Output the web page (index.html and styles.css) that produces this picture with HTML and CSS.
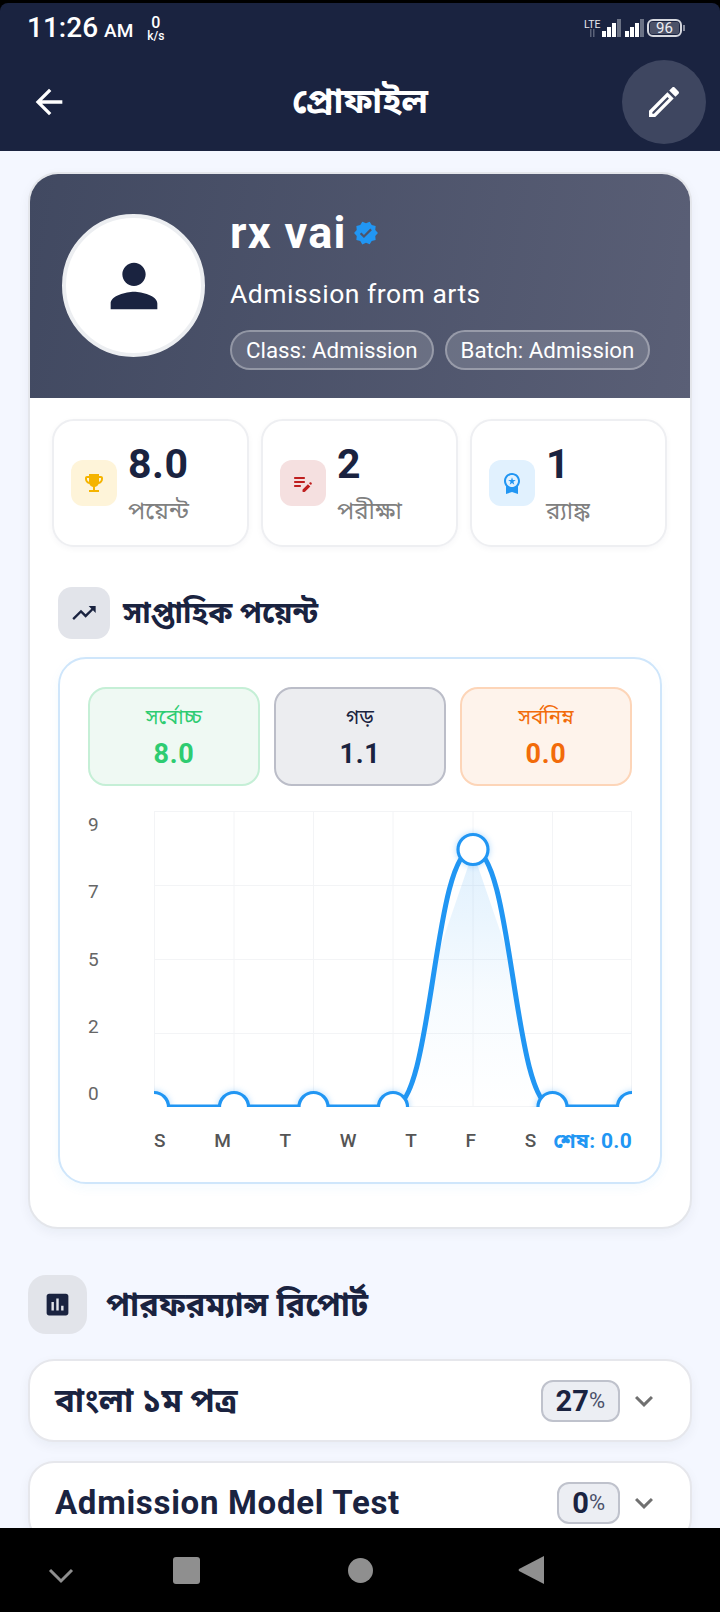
FILE: index.html
```html
<!DOCTYPE html>
<html lang="bn">
<head>
<meta charset="utf-8">
<title>প্রোফাইল</title>
<link rel="stylesheet" href="styles.css">
</head>
<body>
<div class="screen">
  <header class="topbar">
    <div class="status">
      <div class="status-left">
        <span class="clock">11:26</span><span class="ampm">AM</span>
        <span class="speed"><b class="speed-num">0</b><b class="speed-unit">k/s</b></span>
      </div>
      <div class="status-right">
        <svg class="sig" viewBox="0 0 61 18" width="61" height="18">
          <text x="0" y="9" class="lte">LTE</text>
          <rect x="6" y="10" width="1.5" height="8" fill="#5b6278"/><rect x="9" y="10" width="1.5" height="8" fill="#5b6278"/>
          <rect x="18" y="12" width="4" height="6" fill="#fff"/><rect x="23" y="8" width="4" height="10" fill="#fff"/><rect x="28" y="4" width="4" height="14" fill="#fff"/><rect x="33" y="0" width="4" height="18" fill="#6b7285"/>
          <rect x="41" y="12" width="4" height="6" fill="#fff"/><rect x="46" y="8" width="4" height="10" fill="#fff"/><rect x="51" y="4" width="4" height="14" fill="#fff"/><rect x="56" y="0" width="4" height="18" fill="#6b7285"/>
        </svg>
        <div class="battery"><span class="battery-fill">96</span></div>
      </div>
    </div>
    <div class="appbar">
      <svg class="back" viewBox="0 0 24 24"><path d="M20 11H7.83l5.59-5.59L12 4l-8 8 8 8 1.41-1.41L7.83 13H20v-2z"/></svg>
      <h1 class="appbar-title">প্রোফাইল</h1>
      <div class="edit-btn"><svg viewBox="0 0 24 24"><path d="M14.06 9.02l.92.92L5.92 19H5v-.92l9.06-9.06M17.66 3c-.25 0-.51.1-.7.29l-1.83 1.83 3.75 3.75 1.83-1.83c.39-.39.39-1.02 0-1.41l-2.34-2.34c-.2-.2-.45-.29-.71-.29zm-3.6 3.19L3 17.25V21h3.75L17.81 9.94l-3.75-3.75z"/></svg></div>
    </div>
  </header>

  <main class="content">
    <section class="profile-card">
      <div class="hero">
        <div class="avatar"><svg viewBox="0 0 24 24"><path d="M12 12c2.21 0 4-1.79 4-4s-1.79-4-4-4-4 1.79-4 4 1.79 4 4 4zm0 2c-2.67 0-8 1.34-8 4v2h16v-2c0-2.66-5.33-4-8-4z"/></svg></div>
        <div class="hero-info">
          <div class="name-row"><span class="name">rx vai</span><svg class="verified" viewBox="0 0 24 24"><path d="M23 12l-2.44-2.79.34-3.69-3.61-.82-1.89-3.2L12 2.96 8.6 1.5 6.71 4.69 3.1 5.5l.34 3.7L1 12l2.44 2.79-.34 3.7 3.61.82L8.6 22.5l3.4-1.47 3.4 1.46 1.89-3.19 3.61-.82-.34-3.69L23 12zm-12.91 4.72l-3.8-3.81 1.48-1.48 2.32 2.33 5.85-5.87 1.48 1.48-7.33 7.35z"/></svg></div>
          <div class="bio">Admission from arts</div>
          <div class="chips"><span class="chip">Class: Admission</span><span class="chip">Batch: Admission</span></div>
        </div>
      </div>

      <div class="stats">
        <div class="stat">
          <div class="stat-icon yellow"><svg viewBox="0 0 24 24"><path d="M19 5h-2V3H7v2H5c-1.1 0-2 .9-2 2v1c0 2.55 1.92 4.63 4.39 4.94.63 1.5 1.98 2.63 3.61 2.96V19H7v2h10v-2h-4v-3.1c1.63-.33 2.98-1.46 3.61-2.96C19.08 12.63 21 10.55 21 8V7c0-1.1-.9-2-2-2zM5 8V7h2v3.82C5.84 10.4 5 9.3 5 8zm14 0c0 1.3-.84 2.4-2 2.82V7h2v1z"/></svg></div>
          <div class="stat-text"><div class="stat-value">8.0</div><div class="stat-label">পয়েন্ট</div></div>
        </div>
        <div class="stat">
          <div class="stat-icon red"><svg viewBox="0 0 24 24"><path d="M14 11c0 .55-.45 1-1 1H4c-.55 0-1-.45-1-1s.45-1 1-1h9c.55 0 1 .45 1 1zM3 7c0 .55.45 1 1 1h9c.55 0 1-.45 1-1s-.45-1-1-1H4c-.55 0-1 .45-1 1zm7 8c0-.55-.45-1-1-1H4c-.55 0-1 .45-1 1s.45 1 1 1h5c.55 0 1-.45 1-1zm8.01-2.87l.71-.71c.39-.39 1.02-.39 1.41 0l.45.45c.39.39.39 1.02 0 1.41l-.71.71-1.86-1.86zm-1.06 1.06l-5.3 5.3c-.09.09-.15.22-.15.35V20.5c0 .28.22.5.5.5h1.65c.13 0 .26-.05.35-.15l5.3-5.3-2.35-2.36z"/></svg></div>
          <div class="stat-text"><div class="stat-value">2</div><div class="stat-label">পরীক্ষা</div></div>
        </div>
        <div class="stat">
          <div class="stat-icon blue"><svg viewBox="0 0 24 24"><path d="M9.68 13.69L12 11.93l2.31 1.76-.88-2.85L15.75 9h-2.84L12 6.19 11.09 9H8.25l2.31 1.84-.88 2.85zM20 10c0-4.42-3.58-8-8-8s-8 3.58-8 8c0 2.03.76 3.87 2 5.28V23l6-2 6 2v-7.72c1.24-1.41 2-3.25 2-5.28zm-8-6c3.31 0 6 2.69 6 6s-2.69 6-6 6-6-2.69-6-6 2.69-6 6-6z"/></svg></div>
          <div class="stat-text"><div class="stat-value">1</div><div class="stat-label">র‍্যাঙ্ক</div></div>
        </div>
      </div>

      <div class="weekly">
        <div class="section-head small">
          <div class="head-icon"><svg viewBox="0 0 24 24"><path d="M16 6l2.29 2.29-4.88 4.88-4-4L2 16.59 3.41 18l6-6 4 4 6.3-6.29L22 12V6z"/></svg></div>
          <h2 class="head-title">সাপ্তাহিক পয়েন্ট</h2>
        </div>
        <div class="chart-card">
          <div class="summary">
            <div class="sum green"><span class="sum-label">সর্বোচ্চ</span><span class="sum-value">8.0</span></div>
            <div class="sum gray"><span class="sum-label">গড়</span><span class="sum-value">1.1</span></div>
            <div class="sum orange"><span class="sum-label">সর্বনিম্ন</span><span class="sum-value">0.0</span></div>
          </div>
          <div class="chart">
            <div class="y-axis"><span>9</span><span>7</span><span>5</span><span>2</span><span>0</span></div>
            <div class="plot-col">
              <svg class="plot" viewBox="154 811 478 296" width="478" height="296">
                <defs>
                  <linearGradient id="fillgrad" x1="0" y1="0" x2="0" y2="1">
                    <stop offset="0" stop-color="#2196f3" stop-opacity=".14"/>
                    <stop offset=".55" stop-color="#2196f3" stop-opacity=".04"/>
                    <stop offset="1" stop-color="#2196f3" stop-opacity="0"/>
                  </linearGradient>
                </defs>
                <g class="grid">
                  <path d="M154 811.5H632M154 885.5H632M154 959.5H632M154 1033.5H632M154 1106.5H632"/>
                  <path d="M154.5 811V1107M234 811V1107M313.5 811V1107M393 811V1107M473 811V1107M552.5 811V1107M631.5 811V1107"/>
                </g>
                <path class="area" d="M473 852L436 960C430 1010 424 1060 405 1107H541C522 1060 516 1010 510 960Z"/>
                <path class="line" d="M154 1107H393C433 1107 433 849.5 473 849.5C513 849.5 513 1107 553 1107H632"/>
                <g class="dots">
                  <circle cx="154" cy="1107" r="14.5"/><circle cx="234" cy="1107" r="14.5"/><circle cx="313.5" cy="1107" r="14.5"/><circle cx="393" cy="1107" r="14.5"/>
                  <circle cx="473" cy="849.5" r="15"/>
                  <circle cx="552.5" cy="1107" r="14.5"/><circle cx="632" cy="1107" r="14.5"/>
                </g>
              </svg>
              <div class="x-axis">
                <div class="ticks"><span>S</span><span>M</span><span>T</span><span>W</span><span>T</span><span>F</span><span>S</span></div>
                <span class="last">শেষ: 0.0</span>
              </div>
            </div>
          </div>
        </div>
      </div>
    </section>

    <div class="section-head large">
      <div class="head-icon"><svg viewBox="0 0 24 24"><path d="M19 3H5c-1.1 0-2 .9-2 2v14c0 1.1.9 2 2 2h14c1.1 0 2-.9 2-2V5c0-1.1-.9-2-2-2zM9 17H7v-7h2v7zm4 0h-2V7h2v10zm4 0h-2v-4h2v4z"/></svg></div>
      <h2 class="head-title">পারফরম্যান্স রিপোর্ট</h2>
    </div>

    <div class="report">
      <span class="report-name">বাংলা ১ম পত্র</span>
      <span class="badge"><b>27</b><small>%</small></span>
      <svg class="chev" viewBox="0 0 24 24"><path d="M16.59 8.59L12 13.17 7.41 8.59 6 10l6 6 6-6z"/></svg>
    </div>
    <div class="report">
      <span class="report-name latin">Admission Model Test</span>
      <span class="badge"><b>0</b><small>%</small></span>
      <svg class="chev" viewBox="0 0 24 24"><path d="M16.59 8.59L12 13.17 7.41 8.59 6 10l6 6 6-6z"/></svg>
    </div>
  </main>

  <nav class="navbar">
    <svg class="nav-chev" viewBox="0 0 26 16"><path d="M2 2l11 11L24 2" /></svg>
    <span class="nav-square"></span>
    <span class="nav-circle"></span>
    <svg class="nav-back" viewBox="0 0 26 28"><path d="M26 0V28L1 15a1.5 1.5 0 0 1 0-2z"/></svg>
  </nav>
</div>
</body>
</html>
```
FILE: styles.css
```css
* { box-sizing: border-box; }
html, body { margin: 0; padding: 0; }
body {
  width: 720px;
  height: 1612px;
  overflow: hidden;
  background: #000;
  font-family: Roboto, "Noto Sans", "Noto Sans Bengali", "Lohit Bengali", "Noto Sans CJK SC", sans-serif;
}
.screen { width: 720px; height: 1612px; display: flex; flex-direction: column; overflow: hidden; }

.topbar { height: 148px; margin-top: 3px; flex: none; background: #1a2340; border-radius: 8px 8px 0 0; color: #fff; }
.status { height: 50px; display: flex; justify-content: space-between; align-items: center; padding: 0 38px 0 27px; }
.status-left { display: flex; align-items: center; }
.clock { font: 500 28px/1 Roboto, sans-serif; }
.ampm { font: 500 19px/1 Roboto, sans-serif; margin: 4px 0 0 6px; }
.speed { display: flex; flex-direction: column; align-items: center; margin-left: 14px; }
.speed-num { font: 500 16px/15px Roboto, sans-serif; }
.speed-unit { font: 500 12px/12px Roboto, sans-serif; }
.status-right { display: flex; align-items: center; gap: 2px; }
.sig { display: block; overflow: visible; }
.lte { font: 400 10.5px Roboto, sans-serif; fill: #e4e6ec; }
.battery { width: 35px; height: 18px; border: 2px solid #d6d8df; border-radius: 6px; padding: 1px; position: relative; }
.battery::after { content: ""; position: absolute; right: -5px; top: 4px; width: 2px; height: 6px; background: #8a8fa0; }
.battery-fill { display: block; height: 100%; background: #4c5268; border-radius: 2px; color: #eceef3; font: 400 15px/12px Roboto, sans-serif; text-align: center; }

.appbar { height: 98px; display: grid; grid-template-columns: 1fr auto 1fr; align-items: center; padding: 0 14px; }
.back { width: 40px; height: 40px; fill: #fff; margin-left: 15px; }
.appbar-title { margin: 0; font-size: 35px; font-weight: 700; line-height: 40px; color: #fff; }
.edit-btn { width: 84px; height: 84px; border-radius: 50%; background: #3e4660; display: flex; align-items: center; justify-content: center; justify-self: end; }
.edit-btn svg { width: 40px; height: 40px; fill: #fff; }

.content { flex: 1; min-height: 0; overflow: hidden; background: #f4f7ff; padding: 21px 28px 0; }

.profile-card { height: 1057px; background: #fff; border: 2px solid #e4e6eb; border-radius: 30px; overflow: hidden; box-shadow: 0 4px 12px rgba(26,35,64,.05); }
.hero { height: 224px; background: linear-gradient(100deg, #414961, #5a5f76); display: flex; padding: 40px 0 0 32px; gap: 25px; }
.avatar { width: 143px; height: 143px; flex: none; background: #fff; border: 4px solid #eceef1; border-radius: 50%; display: flex; align-items: center; justify-content: center; }
.avatar svg { width: 70px; height: 70px; fill: #1a2340; }
.hero-info { display: flex; flex-direction: column; color: #fff; }
.name-row { display: flex; align-items: center; gap: 6px; height: 50px; margin-top: -6px; }
.name { font-size: 45px; font-weight: 700; line-height: 50px; letter-spacing: 1.3px; }
.verified { width: 26px; height: 26px; fill: #2196f3; }
.bio { font-size: 26.5px; line-height: 34px; margin-top: 19px; letter-spacing: .5px; }
.chips { display: flex; gap: 11px; margin-top: 19px; }
.chip { height: 40px; padding: 0 14px; display: flex; align-items: center; border-radius: 20px; background: rgba(255,255,255,.15); border: 2px solid rgba(255,255,255,.3); font-size: 22.3px; white-space: nowrap; }

.stats { display: grid; grid-template-columns: repeat(3, 197px); gap: 12px; padding: 21px 0 0 22px; }
.stat { height: 128px; border: 2px solid #eeeff2; border-radius: 22px; background: #fff; box-shadow: 0 2px 6px rgba(26,35,64,.04); display: flex; align-items: center; padding-left: 17px; gap: 11px; }
.stat-icon { width: 46px; height: 46px; border-radius: 12px; display: flex; align-items: center; justify-content: center; flex: none; }
.stat-icon svg { width: 24px; height: 24px; }
.yellow { background: #fef4d9; } .yellow svg { fill: #f5b400; }
.red { background: #f5e0e0; } .red svg { fill: #bf1f1f; }
.blue { background: #e1f1fe; } .blue svg { fill: #2196f3; }
.stat-value { font-size: 41px; font-weight: 700; line-height: 46px; color: #1a2340; letter-spacing: .5px; margin-top: 2px; }
.stat-label { font-size: 24px; line-height: 32px; color: #808080; margin-top: 8px; }

.weekly { padding: 0 28px; }
.section-head { display: flex; align-items: center; }
.section-head.small { gap: 13px; margin-top: 40px; }
.section-head.small .head-icon { width: 52px; height: 52px; border-radius: 14px; }
.section-head.small .head-icon svg { width: 28px; height: 28px; }
.head-icon { background: #e2e4ea; display: flex; align-items: center; justify-content: center; flex: none; }
.head-icon svg { fill: #1a2340; }
.head-title { margin: 0; font-weight: 700; color: #1a2340; font-size: 30px; line-height: 40px; }
.section-head.large { gap: 19px; margin-top: 46px; }
.section-head.large .head-icon { width: 59px; height: 59px; border-radius: 18px; }
.section-head.large .head-icon svg { width: 29px; height: 29px; }
.section-head.large .head-title { font-size: 32.5px; }

.chart-card { margin-top: 18px; height: 527px; border: 2px solid #cfe6fb; border-radius: 28px; background: #fff; box-shadow: 0 4px 12px rgba(33,150,243,.05); padding: 28px 28px 0; }
.summary { display: grid; grid-template-columns: repeat(3, 172px); gap: 14px; }
.sum { height: 99px; border: 2px solid; border-radius: 18px; display: flex; flex-direction: column; align-items: center; padding-top: 14px; }
.sum-label { font-size: 20.5px; line-height: 28px; }
.sum-value { font-size: 27px; font-weight: 700; line-height: 34px; margin-top: 6px; letter-spacing: .7px; }
.green { background: #eff9f3; border-color: #c5efd6; color: #2ecc71; }
.gray { background: #ecedf0; border-color: #bbbdc8; color: #1a2340; }
.orange { background: #fef3eb; border-color: #fdd5b8; color: #f26b0a; }

.chart { display: flex; margin-top: 25px; }
.y-axis { width: 66px; height: 297px; display: flex; flex-direction: column; justify-content: space-between; font-size: 19px; line-height: 28px; color: #666; }
.plot-col { width: 478px; }
.plot { display: block; overflow: hidden; }
.grid path { fill: none; stroke: #f3f4f6; stroke-width: 1; }
.area { fill: url(#fillgrad); }
.line { fill: none; stroke: #2196f3; stroke-width: 5; }
.dots circle { fill: #fff; stroke: #2196f3; stroke-width: 3.2; filter: drop-shadow(0 0 3px rgba(33,150,243,.35)); }
.x-axis { display: flex; justify-content: space-between; align-items: center; margin-top: 20px; font-size: 19px; line-height: 28px; font-weight: 500; color: #555; }
.ticks { display: flex; gap: 48.7px; }
.last { color: #2196f3; font-weight: 700; font-size: 21px; letter-spacing: .3px; }

.report { height: 83px; margin-top: 19px; background: #fff; border: 2px solid #e6e7ec; border-radius: 26px; box-shadow: 0 4px 12px rgba(26,35,64,.05); display: flex; align-items: center; padding: 0 28px 0 25px; }
.section-head + .report { margin-top: 25px; }
.report-name { flex: 1; font-size: 33px; font-weight: 700; color: #1a2340; line-height: 40px; }
.report-name.latin { letter-spacing: .7px; }
.badge { height: 42px; padding: 0 13px; border: 2px solid #bfc2cc; border-radius: 12px; background: #eceef3; display: flex; align-items: center; color: #1a2340; }
.badge b { font-size: 29px; font-weight: 700; }
.badge small { font-size: 22px; color: #4a5068; }
.chev { width: 36px; height: 36px; fill: #707070; margin-left: 6px; }

.navbar { height: 84px; flex: none; background: #000; display: flex; align-items: center; }
.nav-chev { width: 26px; height: 16px; margin-left: 48px; fill: none; stroke: #8f8f8f; stroke-width: 3; margin-top: 12px; }
.nav-square { width: 27px; height: 27px; background: #8f8f8f; border-radius: 3px; margin-left: 99px; }
.nav-circle { width: 25px; height: 25px; background: #8f8f8f; border-radius: 50%; margin-left: 148px; }
.nav-back { width: 26px; height: 28px; fill: #8f8f8f; margin-left: 145px; }
```
